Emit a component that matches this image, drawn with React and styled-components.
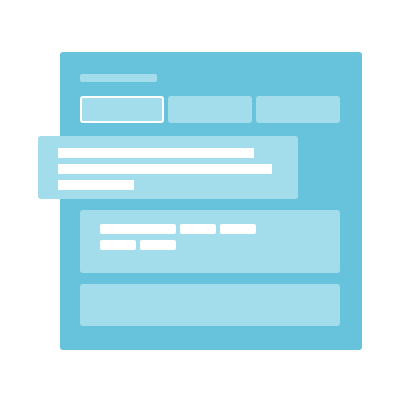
import styled, { createGlobalStyle } from "styled-components";

const GlobalStyle = createGlobalStyle`
  html, body {
    margin: 0;
    padding: 0;
    background: #ffffff;
    font-family: "Liberation Sans", Arial, sans-serif;
  }
`;

const Stage = styled.div`
  width: 400px;
  height: 400px;
  padding: 52px 0 0 60px;
  box-sizing: border-box;
  background: #ffffff;
`;

const Window = styled.section`
  width: 302px;
  height: 298px;
  box-sizing: border-box;
  padding: 22px 22px 0 20px;
  background: #67c3dc;
  border-radius: 3px;
  display: flex;
  flex-direction: column;
`;

const TitleBar = styled.div`
  width: 77px;
  height: 8px;
  border-radius: 2px;
  background: #a3ddeb;
`;

const Tabs = styled.div`
  display: grid;
  grid-template-columns: repeat(3, 84px);
  gap: 4px;
  margin-top: 14px;
`;

const Tab = styled.div`
  height: 27px;
  box-sizing: border-box;
  border-radius: 3px;
  background: #a3ddeb;
  border: ${(p) => (p.$active ? "2px solid #ffffff" : "none")};
`;

const Slot = styled.div`
  height: 87px;
  box-sizing: border-box;
  padding-top: 13px;
`;

const Popover = styled.div`
  width: 260px;
  height: 63px;
  margin-left: -42px;
  box-sizing: border-box;
  padding: 12px 0 0 20px;
  border-radius: 3px;
  background: #a3ddeb;
  display: flex;
  flex-direction: column;
  gap: 6px;
`;

const Line = styled.div`
  width: ${(p) => p.$w}px;
  height: 10px;
  background: #ffffff;
  border-radius: 1px;
`;

const Card = styled.div`
  height: ${(p) => p.$h}px;
  margin-bottom: 11px;
  box-sizing: border-box;
  padding: 14px 20px;
  border-radius: 3px;
  background: #a3ddeb;
  display: flex;
  flex-direction: column;
  gap: 6px;
`;

const ChipRow = styled.div`
  display: flex;
  gap: 4px;
`;

const Chip = styled.div`
  width: ${(p) => p.$w}px;
  height: 10px;
  border-radius: 2px;
  background: #ffffff;
`;

export default function App() {
  return (
    <>
      <GlobalStyle />
      <Stage>
        <Window>
          <TitleBar />
          <Tabs>
            <Tab $active />
            <Tab />
            <Tab />
          </Tabs>
          <Slot>
            <Popover>
              <Line $w={196} />
              <Line $w={214} />
              <Line $w={76} />
            </Popover>
          </Slot>
          <Card $h={63}>
            <ChipRow>
              <Chip $w={76} />
              <Chip $w={36} />
              <Chip $w={36} />
            </ChipRow>
            <ChipRow>
              <Chip $w={36} />
              <Chip $w={36} />
            </ChipRow>
          </Card>
          <Card $h={42} />
        </Window>
      </Stage>
    </>
  );
}
